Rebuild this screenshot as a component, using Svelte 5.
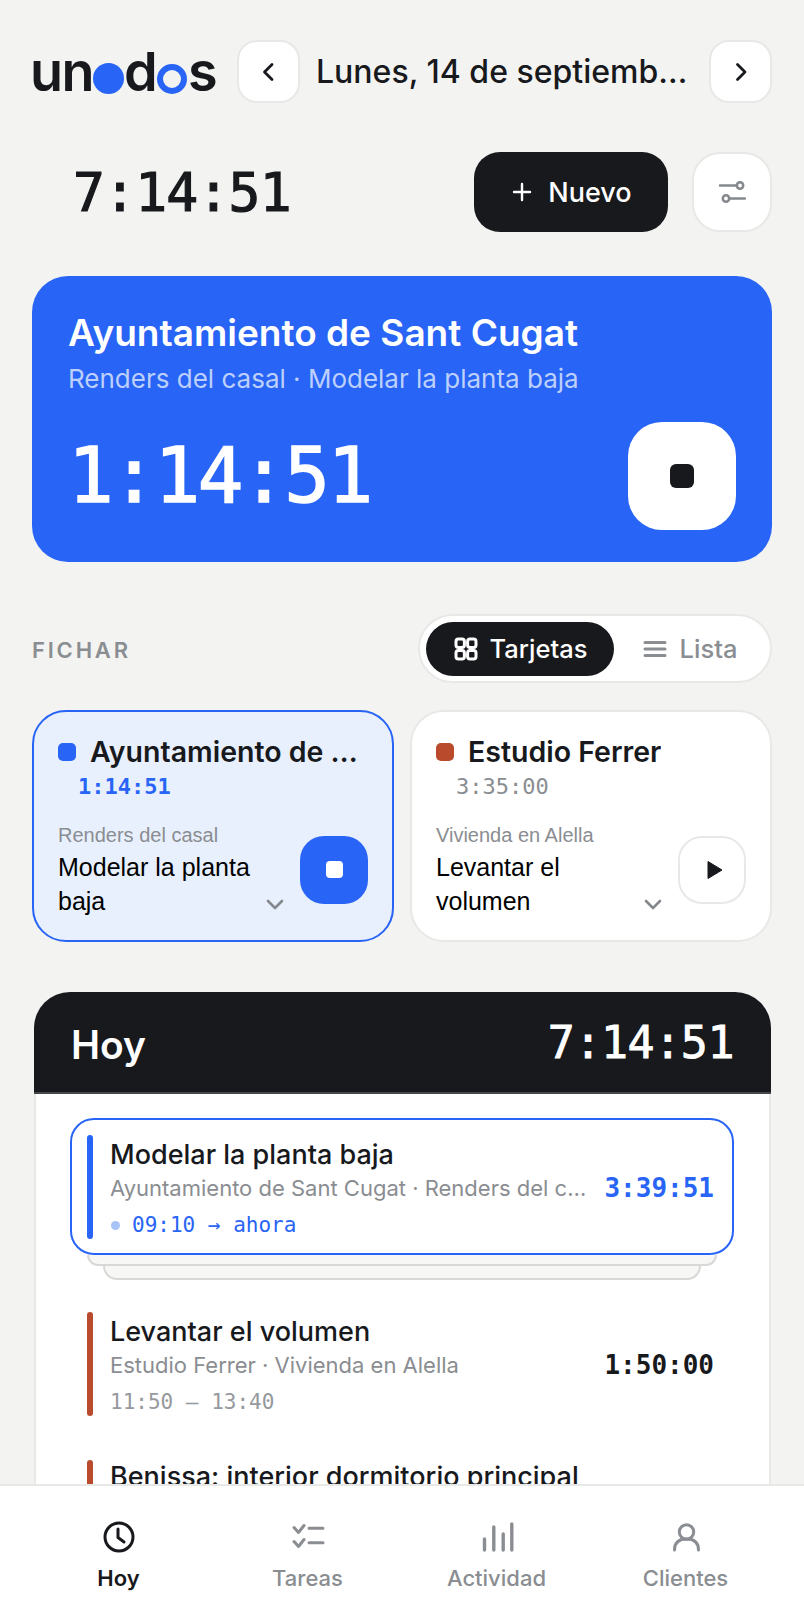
<script>
  const rows = [
    { t: 'Levantar el volumen', s: 'Estudio Ferrer · Vivienda en Alella', r: '11:50 – 13:40', d: '1:50:00' }
  ];
</script>

<div class="page">
  <div class="scroll">
    <header class="top">
      <div class="logo">
        <span class="l-un">un</span><i class="ball"></i><span class="l-d">d</span><i class="ring"></i><span class="l-s">s</span>
      </div>
      <button class="nav-btn" aria-label="Anterior">
        <svg width="24" height="24" viewBox="0 0 24 24" fill="none" stroke="#17191c" stroke-width="2.8" stroke-linecap="round" stroke-linejoin="round"><path d="M15 4.500L7.500 12l7.500 7.500"/></svg>
      </button>
      <div class="date">Lunes, 14 de septiembre de 2026</div>
      <button class="nav-btn" aria-label="Siguiente">
        <svg width="24" height="24" viewBox="0 0 24 24" fill="none" stroke="#17191c" stroke-width="2.8" stroke-linecap="round" stroke-linejoin="round"><path d="M8.500 4.500L16 12l-7.500 7.500"/></svg>
      </button>
    </header>

    <div class="bar">
      <div class="clock">7:14:51</div>
      <button class="new">
        <svg width="24" height="24" viewBox="0 0 24 24" fill="none" stroke="#fff" stroke-width="2.4" stroke-linecap="round"><path d="M12 4v16M4 12h16"/></svg>
        Nuevo
      </button>
      <button class="filter" aria-label="Filtros">
        <svg width="28" height="28" viewBox="0 0 28 28" fill="none" stroke="#85888d" stroke-width="2.5" stroke-linecap="round"><path d="M2 7.500h17"/><circle cx="22" cy="7.500" r="3.200"/><circle cx="8" cy="20.500" r="3.200"/><path d="M11 20.500h16"/></svg>
      </button>
    </div>

    <section class="hero">
      <h1>Ayuntamiento de Sant Cugat</h1>
      <p>Renders del casal · Modelar la planta baja</p>
      <div class="hero-row">
        <div class="hero-time">1:14:51</div>
        <button class="hero-stop" aria-label="Parar"><i></i></button>
      </div>
    </section>

    <div class="sec">
      <div class="sec-label">FICHAR</div>
      <div class="toggle">
        <div class="tg on">
          <svg width="26" height="26" viewBox="0 0 26 26" fill="none" stroke="#fff" stroke-width="3"><rect x="3" y="3" width="8.400" height="8.400" rx="2.400"/><rect x="14.600" y="3" width="8.400" height="8.400" rx="2.400"/><rect x="3" y="14.600" width="8.400" height="8.400" rx="2.400"/><rect x="14.600" y="14.600" width="8.400" height="8.400" rx="2.400"/></svg>
          Tarjetas
        </div>
        <div class="tg">
          <svg width="26" height="26" viewBox="0 0 26 26" fill="none" stroke="#8a8d91" stroke-width="3" stroke-linecap="round"><path d="M3 6.500h20M3 13h20M3 19.500h20"/></svg>
          Lista
        </div>
      </div>
    </div>

    <div class="cards">
      <article class="card active">
        <div class="c-head"><i class="dot blue"></i><h3>Ayuntamiento de Sant Cugat</h3></div>
        <div class="c-time">1:14:51</div>
        <div class="c-foot">
          <div class="c-text">
            <div class="c-label">Renders del casal</div>
            <div class="c-task">Modelar la planta baja</div>
          </div>
          <svg class="chev" width="20" height="12" viewBox="0 0 20 12" fill="none" stroke="#85888c" stroke-width="2.6" stroke-linecap="round" stroke-linejoin="round"><path d="M3 2l7 7 7-7"/></svg>
          <button class="c-btn stop" aria-label="Parar"><i></i></button>
        </div>
      </article>
      <article class="card">
        <div class="c-head"><i class="dot red"></i><h3>Estudio Ferrer</h3></div>
        <div class="c-time idle">3:35:00</div>
        <div class="c-foot">
          <div class="c-text">
            <div class="c-label">Vivienda en Alella</div>
            <div class="c-task">Levantar el volumen</div>
          </div>
          <svg class="chev" width="20" height="12" viewBox="0 0 20 12" fill="none" stroke="#85888c" stroke-width="2.6" stroke-linecap="round" stroke-linejoin="round"><path d="M3 2l7 7 7-7"/></svg>
          <button class="c-btn play" aria-label="Iniciar">
            <svg class="tri" width="16" height="20" viewBox="0 0 16 20"><path d="M1 1.500v17L15 10z" fill="#17191c" stroke="#17191c" stroke-linejoin="round"/></svg>
          </button>
        </div>
      </article>
    </div>

    <section class="today">
      <div class="t-head">
        <h2>Hoy</h2>
        <div class="t-total">7:14:51</div>
      </div>
      <div class="t-body">
        <div class="entry current">
          <i class="stripe blue"></i>
          <div class="e-main">
            <div class="e-title">Modelar la planta baja</div>
            <div class="e-sub">Ayuntamiento de Sant Cugat · Renders del casal</div>
            <div class="e-range now"><i></i>09:10 → ahora</div>
          </div>
          <div class="e-dur live">3:39:51</div>
        </div>
        <div class="layer one"></div>
        <div class="layer two"></div>
        {#each rows as r}
          <div class="entry">
            <i class="stripe red"></i>
            <div class="e-main">
              <div class="e-title">{r.t}</div>
              <div class="e-sub">{r.s}</div>
              <div class="e-range">{r.r}</div>
            </div>
            <div class="e-dur">{r.d}</div>
          </div>
        {/each}
        <div class="entry last">
          <i class="stripe red"></i>
          <div class="e-title">Benissa: interior dormitorio principal</div>
        </div>
      </div>
    </section>
  </div>

  <nav class="tabs">
    <div class="tab sel">
      <svg width="34" height="34" viewBox="0 0 34 34" fill="none" stroke="#17191c" stroke-width="3" stroke-linecap="round" stroke-linejoin="round"><circle cx="17" cy="17" r="14"/><path d="M16 9v8.500l6 4.500"/></svg>
      <span>Hoy</span>
    </div>
    <div class="tab">
      <svg width="34" height="34" viewBox="0 0 34 34" fill="none" stroke="#8a8d91" stroke-width="3" stroke-linecap="round" stroke-linejoin="round"><path d="M3 7.500l4.500 5L13 5.500M3 21.500l4.500 5L13 19.500M18 8.300h14M18 22.700h14"/></svg>
      <span>Tareas</span>
    </div>
    <div class="tab">
      <svg width="34" height="34" viewBox="0 0 34 34" fill="none" stroke="#8a8d91" stroke-width="3.400" stroke-linecap="round"><path d="M4.500 30V19M13.800 30V7M23.200 30V14M31.800 30V4"/></svg>
      <span>Actividad</span>
    </div>
    <div class="tab">
      <svg width="34" height="34" viewBox="0 0 34 34" fill="none" stroke="#8a8d91" stroke-width="3" stroke-linecap="round"><circle cx="17.500" cy="12" r="7.200"/><path d="M5.500 30c0-7.500 4.500-11 12-11s12 3.500 12 11"/></svg>
      <span>Clientes</span>
    </div>
  </nav>
</div>

<style>
  :global(body) { margin: 0; background: #f3f3f2; }
  * { box-sizing: border-box; }
  i { display: block; }
  button { border: 0; padding: 0; cursor: pointer; display: flex; align-items: center; justify-content: center; font: inherit; }
  h1, h2, h3, p { margin: 0; }

  .page {
    width: 804px; height: 1624px; overflow: hidden;
    display: flex; flex-direction: column;
    background: #f3f3f2; color: #17191c;
    font-family: Inter, "Liberation Sans", sans-serif;
  }
  .scroll { flex: 1; min-height: 0; overflow: hidden; padding: 40px 32px 0; }

  .top { display: flex; align-items: center; height: 63px; }
  .logo { display: flex; align-items: center; flex: none; width: 185px; margin-right: 20px; font-size: 54px; font-weight: 600; letter-spacing: -1.5px; line-height: 63px; color: #17191c; }
  .l-un { width: 62px; flex: none; margin-left: -2px; }
  .l-d { width: 33px; flex: none; margin-left: -1px; }
  .l-s { width: 27px; flex: none; }
  .ball { width: 31px; height: 31px; border-radius: 50%; background: #2864f5; margin: 14px 1px 0 1px; flex: none; }
  .ring { width: 30px; height: 30px; border-radius: 50%; border: 6px solid #2864f5; margin: 14px 1px 0 0; flex: none; }
  .nav-btn { width: 63px; height: 63px; flex: none; background: #fff; border: 2px solid #e8e8e6; border-radius: 20px; }
  .date { flex: 1; min-width: 0; padding: 0 12px 0 16px; font-size: 32px; font-weight: 500; white-space: nowrap; overflow: hidden; text-overflow: ellipsis; }

  .bar { display: flex; align-items: center; margin-top: 49px; height: 80px; }
  .clock { flex: 1; padding-left: 41px; font-family: "DejaVu Sans Mono", monospace; font-size: 53px; font-weight: 400; letter-spacing: -.8px; -webkit-text-stroke: 1.2px #17191c; }
  .new { width: 194px; height: 80px; border-radius: 26px; background: #17191c; color: #fff; font-size: 27px; font-weight: 500; gap: 14px; }
  .filter { width: 80px; height: 80px; margin-left: 24px; background: #fff; border: 2px solid #e8e8e6; border-radius: 28px; }

  .hero { margin-top: 44px; height: 286px; border-radius: 36px; background: #2864f5; color: #fff; padding: 35px 36px 32px; display: flex; flex-direction: column; }
  .hero h1 { font-size: 37px; font-weight: 600; line-height: 44px; }
  .hero p { font-size: 26px; line-height: 34px; margin-top: 7px; color: #bcd0fb; }
  .hero-row { display: flex; align-items: center; justify-content: space-between; margin-top: auto; }
  .hero-time { font-family: "DejaVu Sans Mono", monospace; font-size: 76px; font-weight: 400; letter-spacing: -2.5px; line-height: 108px; -webkit-text-stroke: 1.4px #fff; }
  .hero-stop { width: 108px; height: 108px; border-radius: 34px; background: #fff; }
  .hero-stop i { width: 24px; height: 24px; border-radius: 6px; background: #17191c; }

  .sec { display: flex; align-items: center; justify-content: space-between; margin-top: 52px; height: 69px; }
  .sec-label { font-size: 22px; font-weight: 600; letter-spacing: 2.8px; color: #8a8d91; margin-top: 3px; }
  .toggle { width: 354px; height: 69px; display: flex; align-items: center; padding: 0 5px 0 6px; background: #fff; border: 2px solid #e8e8e6; border-radius: 35px; }
  .tg { height: 54px; display: flex; align-items: center; justify-content: center; gap: 12px; font-size: 25.500px; font-weight: 500; color: #8a8d91; flex: 1; }
  .tg.on { flex: none; width: 188px; background: #17191c; color: #fff; border-radius: 27px; gap: 11px; }

  .cards { display: grid; grid-template-columns: 362px 362px; gap: 16px; margin-top: 27px; }
  .card { height: 232px; padding: 26px 24px 0; border: 2px solid #e8e8e6; border-radius: 34px; background: #fff; min-width: 0; }
  .card.active { background: #e9f0fd; border-color: #2864f5; }
  .c-head { display: flex; align-items: center; gap: 14px; height: 28px; }
  .dot { width: 18px; height: 18px; border-radius: 5px; flex: none; }
  .dot.blue { background: #2864f5; }
  .dot.red { background: #b94a2c; }
  .c-head h3 { font-size: 28.500px; font-weight: 600; white-space: nowrap; overflow: hidden; text-overflow: ellipsis; min-width: 0; line-height: 36px; }
  .c-time { margin: 6px 0 0 20px; font-family: "DejaVu Sans Mono", monospace; font-size: 22px; font-weight: 700; color: #2864f5; line-height: 30px; }
  .c-time.idle { color: #8a8d91; font-weight: 400; }
  .c-foot { display: flex; align-items: center; margin-top: 21px; }
  .c-text { width: 205px; flex: none; font-family: "Liberation Sans", sans-serif; }
  .c-label { font-size: 20px; line-height: 24px; color: #8a8d91; }
  .c-task { font-size: 25px; line-height: 34px; margin-top: 3px; color: #000; }
  .chev { margin: 68px 0 0 2px; flex: none; }
  .c-btn { width: 68px; height: 68px; border-radius: 24px; margin: -2px 0 0 auto; flex: none; }
  .stop { background: #2864f5; }
  .stop i { width: 17px; height: 17px; border-radius: 4px; background: #fff; }
  .play { background: #fff; border: 2px solid #e8e8e6; }
  .tri { margin-left: 5px; }

  .today { margin: 50px 1px 0 2px; }
  .t-head { height: 102px; background: #17191c; color: #fff; border-radius: 36px 36px 0 0; border-bottom: 2px solid #46484c; display: flex; align-items: center; justify-content: space-between; padding: 0 37px; }
  .t-head h2 { font-size: 39px; font-weight: 600; margin-top: 4px; }
  .t-total { font-family: "DejaVu Sans Mono", monospace; font-size: 45px; font-weight: 400; letter-spacing: -.5px; -webkit-text-stroke: .8px #fff; }
  .t-body { background: #fff; border: solid #e8e8e6; border-width: 0 2px; padding: 24px 35px 0 34px; }

  .entry { display: flex; align-items: center; gap: 17px; height: 137px; padding: 0 18px 0 15px; border: 2px solid transparent; border-radius: 24px; background: #fff; margin-top: 15px; }
  .entry + .entry { margin-top: 12px; }
  .entry.current { margin-top: 0; border-color: #2864f5; }
  .stripe { width: 6px; height: 104px; border-radius: 3px; flex: none; }
  .stripe.blue { background: #2864f5; }
  .stripe.red { background: #b94a2c; }
  .e-main { flex: 1; min-width: 0; padding-top: 8px; }
  .e-title { font-size: 27px; font-weight: 500; line-height: 34px; white-space: nowrap; overflow: hidden; text-overflow: ellipsis; }
  .e-sub { font-size: 22px; line-height: 32px; color: #8a8d91; white-space: nowrap; overflow: hidden; text-overflow: ellipsis; }
  .e-range { display: flex; align-items: center; gap: 12px; font-family: "DejaVu Sans Mono", monospace; font-size: 21px; line-height: 36px; margin-top: 3px; color: #96999d; }
  .e-range.now { color: #2864f5; }
  .e-range i { width: 9px; height: 9px; border-radius: 50%; background: #a8c3f8; margin-left: 1px; }
  .e-dur { flex: none; font-family: "DejaVu Sans Mono", monospace; font-size: 26px; font-weight: 700; margin: 2px 0 0 0; }
  .e-dur.live { color: #2864f5; }
  .entry.last { align-items: flex-start; padding-top: 14px; }
  .entry.last .e-title { flex: 1; min-width: 0; }

  .layer { background: #f7f7f5; border: solid #d8d8d6; border-width: 0 2px 2px; }
  .layer.one { height: 11px; margin: 0 17px; border-radius: 0 0 18px 18px; }
  .layer.two { height: 14px; margin: 0 33px; border-radius: 0 0 18px 18px; }

  .tabs { flex: none; height: 140px; background: #fff; border-top: 2px solid #e8e8e6; display: grid; grid-template-columns: repeat(4, 1fr); padding: 34px 24px 0; }
  .tab { display: flex; flex-direction: column; align-items: center; gap: 11px; font-size: 22px; font-weight: 500; color: #8a8d91; }
  .tab.sel { color: #17191c; font-weight: 600; }
</style>
